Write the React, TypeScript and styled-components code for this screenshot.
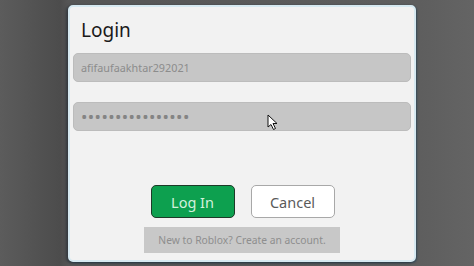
import styled, { createGlobalStyle } from 'styled-components';

const GlobalStyle = createGlobalStyle`
  html, body {
    margin: 0;
    padding: 0;
    background: #606060;
    font-family: 'Noto Sans', 'Open Sans', sans-serif;
  }
`;

const Screen = styled.div`
  width: 474px;
  height: 266px;
  overflow: hidden;
  padding: 5px 0 0 68px;
  box-sizing: border-box;
  background: linear-gradient(90deg, #5c5c5c 0, #4c4c4c 60px, #555 68px, #5e5e5e 420px, #646464 100%);
`;

const Dialog = styled.div`
  width: 348px;
  height: 257px;
  box-sizing: border-box;
  background: #f2f2f2;
  border: 2px solid #d6e9f1;
  border-radius: 5px;
  box-shadow: -2px 1px 3px rgba(30, 40, 50, 0.6), 1px 1px 2px rgba(40, 70, 90, 0.7);
  padding: 0 3px 0 3px;
  display: flex;
  flex-direction: column;
`;

const Title = styled.h1`
  margin: 0;
  padding: 10px 0 0 8px;
  height: 36px;
  font-size: 19px;
  font-weight: 400;
  line-height: 27px;
  color: #1a1a1a;
`;

const Field = styled.div`
  position: relative;
  height: 29px;
  box-sizing: border-box;
  background: #c6c6c6;
  border: 1px solid #bcbcbc;
  border-radius: 5px;
  padding: 0 0 0 7px;
  display: flex;
  align-items: center;
  color: #8c8c8c;
  font-size: 10.8px;
  margin-bottom: 20px;
`;

const Dots = styled.span`
  font-size: 17px;
  letter-spacing: 0.4px;
  color: #848484;
  line-height: 1;
`;

const Cursor = styled.svg`
  position: absolute;
  left: 193px;
  top: 11px;
`;

const Buttons = styled.div`
  margin-top: 34px;
  display: flex;
  justify-content: center;
  gap: 16px;
  padding-left: 1px;
`;

const Button = styled.button<{ $primary?: boolean }>`
  width: 84px;
  height: 33px;
  box-sizing: border-box;
  border-radius: 5px;
  font-family: inherit;
  font-size: 14.5px;
  padding: 0;
  cursor: pointer;
  border: ${(p) => (p.$primary ? '1.5px solid #1d3a28' : '1.5px solid #a8a8a8')};
  background: ${(p) => (p.$primary ? '#0da04f' : '#ffffff')};
  color: ${(p) => (p.$primary ? '#d3f1dd' : '#5a5a5a')};
`;

const Signup = styled.div`
  margin: 9px auto 0;
  width: 196px;
  height: 26px;
  background: #c8c8c8;
  color: #8e8e8e;
  font-size: 10.3px;
  display: flex;
  align-items: center;
  justify-content: center;
`;

export default function App() {
  return (
    <>
      <GlobalStyle />
      <Screen>
        <Dialog>
          <Title>Login</Title>
          <Field>afifaufaakhtar292021</Field>
          <Field>
            <Dots>••••••••••••••••</Dots>
            <Cursor width="12" height="17" viewBox="0 0 12 17">
              <path
                d="M1 1 L1 13 L4 10.5 L6.5 15.5 L8.5 14.5 L6 9.5 L10 9.5 Z"
                fill="#ffffff"
                stroke="#111"
                strokeWidth="1"
                strokeLinejoin="round"
              />
            </Cursor>
          </Field>
          <Buttons>
            <Button $primary>Log In</Button>
            <Button>Cancel</Button>
          </Buttons>
          <Signup>New to Roblox? Create an account.</Signup>
        </Dialog>
      </Screen>
    </>
  );
}
